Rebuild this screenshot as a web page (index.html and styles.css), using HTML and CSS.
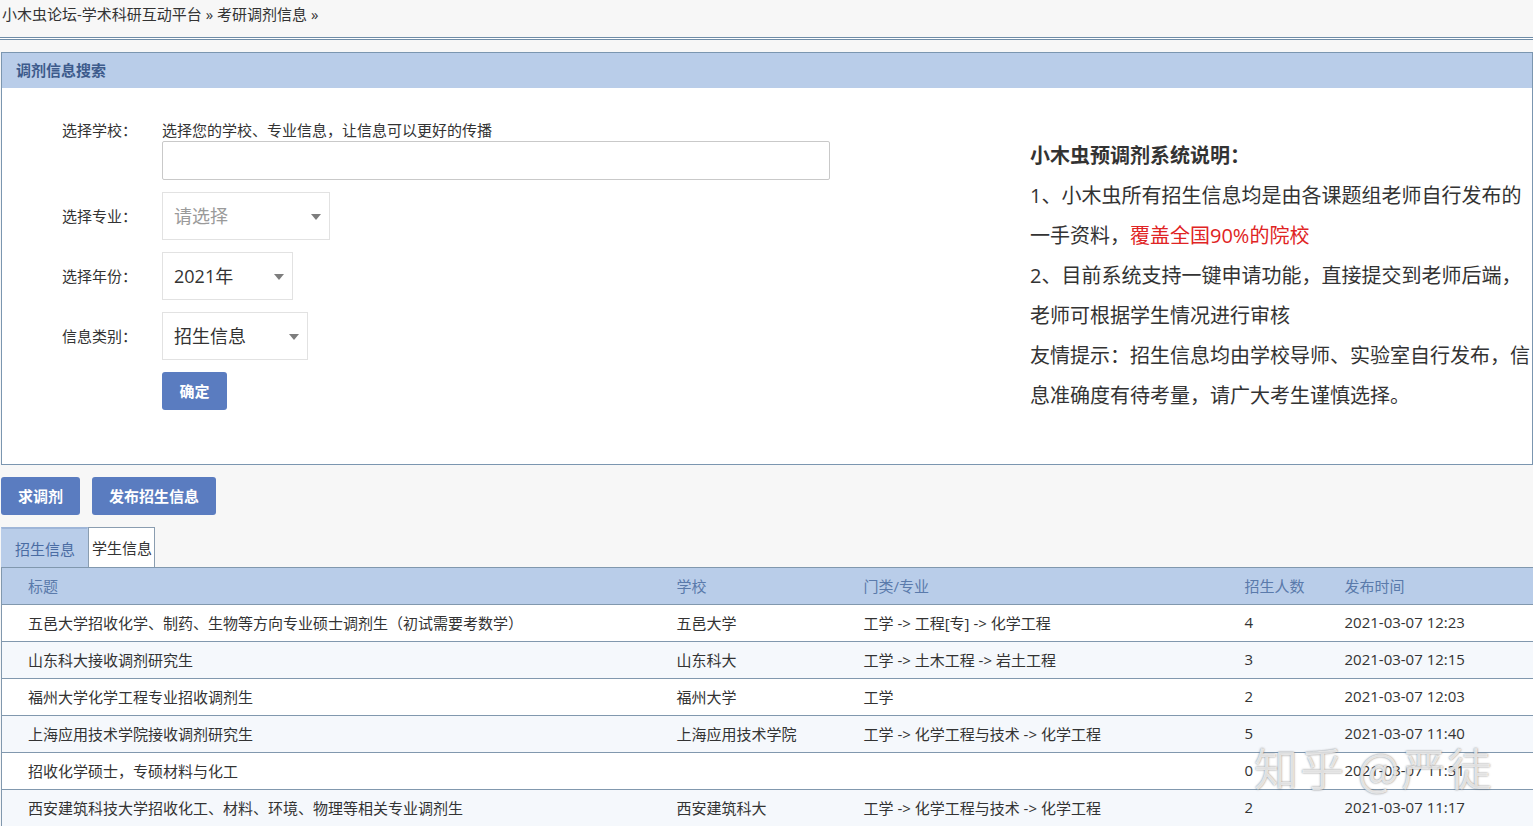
FILE: index.html
```html
<!DOCTYPE html>
<html lang="zh-CN">
<head>
<meta charset="utf-8">
<title>考研调剂信息</title>
<link rel="stylesheet" href="styles.css">
</head>
<body>
<div class="page">
  <div class="crumbs">小木虫论坛-学术科研互动平台 » 考研调剂信息 »</div>
  <div class="rule"></div>

  <section class="panel">
    <div class="panel-head">调剂信息搜索</div>
    <div class="panel-body">
      <div class="form">
        <div class="label first">选择学校：</div>
        <div class="field">
          <div class="hint">选择您的学校、专业信息，让信息可以更好的传播</div>
          <div class="input"></div>
        </div>

        <div class="label">选择专业：</div>
        <div class="field">
          <div class="select w-major placeholder">请选择<span class="caret"></span></div>
        </div>

        <div class="label">选择年份：</div>
        <div class="field">
          <div class="select w-year">2021年<span class="caret"></span></div>
        </div>

        <div class="label">信息类别：</div>
        <div class="field">
          <div class="select w-type">招生信息<span class="caret"></span></div>
        </div>

        <div class="label"></div>
        <div class="field">
          <div class="btn btn-ok">确定</div>
        </div>
      </div>

      <div class="notice">
        <div class="notice-title">小木虫预调剂系统说明：</div>
        <p>1、小木虫所有招生信息均是由各课题组老师自行发布的一手资料，<span class="red">覆盖全国90%的院校</span></p>
        <p>2、目前系统支持一键申请功能，直接提交到老师后端，老师可根据学生情况进行审核</p>
        <p>友情提示：招生信息均由学校导师、实验室自行发布，信息准确度有待考量，请广大考生谨慎选择。</p>
      </div>
    </div>
  </section>

  <div class="actions">
    <div class="btn btn-big">求调剂</div>
    <div class="btn btn-big">发布招生信息</div>
  </div>

  <div class="tabs">
    <div class="tab active">招生信息</div>
    <div class="tab">学生信息</div>
  </div>

  <table class="list">
    <colgroup>
      <col class="c1"><col class="c2"><col class="c3"><col class="c4"><col class="c5">
    </colgroup>
    <thead>
      <tr><th>标题</th><th>学校</th><th>门类/专业</th><th>招生人数</th><th>发布时间</th></tr>
    </thead>
    <tbody>
      <tr><td>五邑大学招收化学、制药、生物等方向专业硕士调剂生（初试需要考数学）</td><td>五邑大学</td><td>工学 -&gt; 工程[专] -&gt; 化学工程</td><td>4</td><td>2021-03-07 12:23</td></tr>
      <tr class="alt"><td>山东科大接收调剂研究生</td><td>山东科大</td><td>工学 -&gt; 土木工程 -&gt; 岩土工程</td><td>3</td><td>2021-03-07 12:15</td></tr>
      <tr><td>福州大学化学工程专业招收调剂生</td><td>福州大学</td><td>工学</td><td>2</td><td>2021-03-07 12:03</td></tr>
      <tr class="alt"><td>上海应用技术学院接收调剂研究生</td><td>上海应用技术学院</td><td>工学 -&gt; 化学工程与技术 -&gt; 化学工程</td><td>5</td><td>2021-03-07 11:40</td></tr>
      <tr><td>招收化学硕士，专硕材料与化工</td><td></td><td></td><td>0</td><td>2021-03-07 11:31</td></tr>
      <tr class="alt"><td>西安建筑科技大学招收化工、材料、环境、物理等相关专业调剂生</td><td>西安建筑科大</td><td>工学 -&gt; 化学工程与技术 -&gt; 化学工程</td><td>2</td><td>2021-03-07 11:17</td></tr>
    </tbody>
  </table>

  <div class="watermark">知乎 @严徒</div>
</div>
</body>
</html>
```

FILE: styles.css
```css
* { box-sizing: border-box; }

html, body {
  margin: 0;
  padding: 0;
  background: #f7f7f7;
  font-family: "Open Sans", "Noto Sans CJK SC", "Noto Sans", sans-serif;
  color: #333;
  font-size: 15px;
}

.page {
  position: relative;
  padding: 0 0 0 1px;
  width: 1533px;
  height: 826px;
  overflow: hidden;
}

.crumbs {
  height: 28px;
  line-height: 28px;
  padding-left: 1px;
  font-size: 15px;
  color: #333;
}

.rule {
  margin: 9px 0 0 -1px;
  height: 3px;
  border-top: 1px solid #6f8ca7;
  border-bottom: 1px solid #6f8ca7;
  background: #fff;
}

.panel {
  margin-top: 12px;
  border: 1px solid #7b96b0;
  background: #fff;
}

.panel-head {
  height: 35px;
  line-height: 35px;
  padding-left: 14px;
  background: #b9cde9;
  color: #3d5b8c;
  font-weight: bold;
  font-size: 15px;
}

.panel-body {
  display: grid;
  grid-template-columns: 1fr 502px;
  align-items: center;
  height: 376px;
  padding-left: 60px;
}

.form {
  align-self: start;
  padding-top: 32px;
  display: grid;
  grid-template-columns: 100px auto;
  row-gap: 12px;
  align-items: center;
}

.label {
  font-size: 15px;
  color: #333;
  line-height: 20px;
  white-space: nowrap;
}

.label.first {
  align-self: start;
}

.field {
  display: flex;
  flex-direction: column;
  align-items: flex-start;
}

.hint {
  line-height: 20px;
  font-size: 15px;
  color: #333;
  margin-bottom: 1px;
  white-space: nowrap;
}

.input {
  width: 668px;
  height: 39px;
  border: 1px solid #c9c9c9;
  border-radius: 2px;
  background: #fff;
}

.select {
  position: relative;
  height: 48px;
  line-height: 46px;
  padding-left: 11px;
  border: 1px solid #e2e2e2;
  background: #fff;
  font-size: 18px;
  color: #333;
  white-space: nowrap;
}

.select.placeholder { color: #9a9a9a; }

.w-major { width: 168px; }
.w-year { width: 131px; }
.w-type { width: 146px; }

.caret {
  position: absolute;
  right: 8px;
  top: 21px;
  width: 0;
  height: 0;
  border-left: 5px solid transparent;
  border-right: 5px solid transparent;
  border-top: 6px solid #7d7d7d;
}

.btn {
  display: inline-block;
  background: #5a7cc0;
  color: #fff;
  font-weight: bold;
  font-size: 15px;
  border-radius: 3px;
  text-align: center;
  white-space: nowrap;
}

.btn-ok {
  width: 65px;
  height: 38px;
  line-height: 38px;
}

.notice {
  font-size: 20px;
  line-height: 40px;
  color: #333;
}

.notice p { margin: 0; }

.notice-title {
  font-weight: bold;
  font-size: 20px;
  color: #333;
}

.red { color: #e02424; }

.actions {
  display: flex;
  gap: 12px;
  margin-top: 12px;
}

.btn-big {
  height: 38px;
  line-height: 38px;
  padding: 0 17px;
}

.tabs {
  display: flex;
  margin-top: 12px;
  height: 40px;
}

.tab {
  height: 40px;
  line-height: 40px;
  font-size: 15px;
  padding: 0 2px 0 3px;
  background: #fff;
  border: 1px solid #8a9db0;
  border-bottom: none;
  color: #333;
  white-space: nowrap;
}

.tab.active {
  background: #b9cde9;
  color: #4a6ca3;
  border-color: #b9cde9;
  border-top: 2px solid #9fb6d8;
  padding: 0 12px 0 13px;
  line-height: 40px;
}

.list {
  width: 1532px;
  border-collapse: collapse;
  table-layout: fixed;
  margin-left: 0;
}

.list col.c1 { width: 649px; }
.list col.c2 { width: 187px; }
.list col.c3 { width: 381px; }
.list col.c4 { width: 100px; }
.list col.c5 { width: 215px; }

.list th,
.list td {
  height: 37px;
  padding: 0 0 2px 26px;
  text-align: left;
  font-size: 15px;
  white-space: nowrap;
  overflow: hidden;
  border-top: 1px solid #8198ae;
  border-bottom: 1px solid #8198ae;
}

.list th {
  background: #b9cde9;
  color: #5a7aab;
  font-weight: normal;
}

.list tr > *:first-child { border-left: 1px solid #8198ae; }
.list tr > *:last-child { border-right: 1px solid #8198ae; }

.list td {
  background: #fff;
  color: #333;
}

.list tr.alt td { background: #f5f8fc; }

.watermark {
  position: absolute;
  left: 1254px;
  top: 735px;
  font-family: "Noto Sans CJK SC", sans-serif;
  font-size: 44px;
  letter-spacing: 2px;
  color: rgba(255, 255, 255, 0.75);
  text-shadow: 0 0 2px rgba(90, 90, 90, 0.8);
  pointer-events: none;
}
```
